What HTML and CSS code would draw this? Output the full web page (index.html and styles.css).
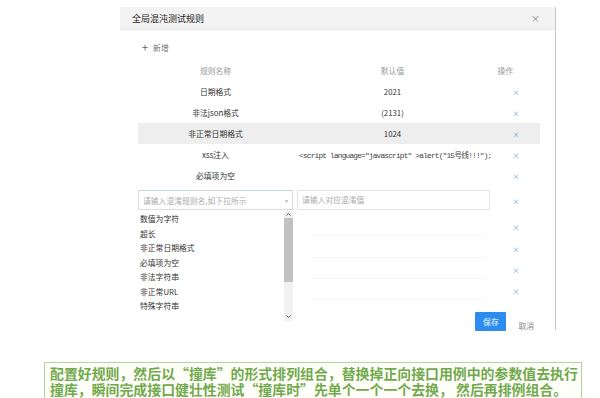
FILE: index.html
```html
<!DOCTYPE html>
<html lang="zh-CN">
<head>
    <meta charset="UTF-8">
    <meta name="viewport" content="width=device-width, initial-scale=1.0">
    <title>全局混沌测试规则</title>
    <link rel="stylesheet" href="styles.css">
</head>
<body>
    <div class="page">
        <div class="modal">
            <div class="modal-head">
                <span class="modal-title">全局混沌测试规则</span>
                <span class="modal-close">×</span>
            </div>
            <div class="modal-body">
                <div class="add-btn"><span class="plus">+</span>新增</div>

                <div class="rules">
                    <div class="row row-head">
                        <div class="col col-name">规则名称</div>
                        <div class="col col-value">默认值</div>
                        <div class="col col-op">操作</div>
                    </div>
                    <div class="row">
                        <div class="col col-name">日期格式</div>
                        <div class="col col-value">2021</div>
                        <div class="col col-op"><span class="del">×</span></div>
                    </div>
                    <div class="row">
                        <div class="col col-name">非法json格式</div>
                        <div class="col col-value">(2131)</div>
                        <div class="col col-op"><span class="del">×</span></div>
                    </div>
                    <div class="row row-hover">
                        <div class="col col-name">非正常日期格式</div>
                        <div class="col col-value">1024</div>
                        <div class="col col-op"><span class="del">×</span></div>
                    </div>
                    <div class="row">
                        <div class="col col-name">xss注入</div>
                        <div class="col col-value code">&lt;script language="javascript" &gt;alert("15号线!!!");</div>
                        <div class="col col-op"><span class="del">×</span></div>
                    </div>
                    <div class="row">
                        <div class="col col-name">必填项为空</div>
                        <div class="col col-value"></div>
                        <div class="col col-op"><span class="del">×</span></div>
                    </div>
                    <div class="row row-edit">
                        <div class="col col-name">
                            <div class="select">
                                <span class="placeholder">请输入混淆规则名,如下拉所示</span>
                                <span class="caret">▾</span>
                                <div class="dropdown">
                                    <div class="options">
                                        <div class="option">数值为字符</div>
                                        <div class="option">超长</div>
                                        <div class="option">非正常日期格式</div>
                                        <div class="option">必填项为空</div>
                                        <div class="option">非法字符串</div>
                                        <div class="option">非正常URL</div>
                                        <div class="option">特殊字符串</div>
                                    </div>
                                    <div class="scrollbar">
                                        <svg class="arrow" width="9" height="7" viewBox="0 0 9 7"><path d="M2.5 4.5 L4.5 2.5 L6.5 4.5" fill="none" stroke="#555" stroke-width="1"/></svg>
                                        <div class="thumb"></div>
                                        <svg class="arrow arrow-down" width="9" height="7" viewBox="0 0 9 7"><path d="M2.5 2.5 L4.5 4.5 L6.5 2.5" fill="none" stroke="#555" stroke-width="1"/></svg>
                                    </div>
                                </div>
                            </div>
                        </div>
                        <div class="col col-value">
                            <div class="text-input">请输入对应混淆值</div>
                        </div>
                        <div class="col col-op"><span class="del">×</span></div>
                    </div>
                    <div class="row row-empty row-first-empty">
                        <div class="col col-name"></div>
                        <div class="col col-value"><div class="blank"></div></div>
                        <div class="col col-op"><span class="del">×</span></div>
                    </div>
                    <div class="row row-empty">
                        <div class="col col-name"></div>
                        <div class="col col-value"><div class="blank"></div></div>
                        <div class="col col-op"><span class="del">×</span></div>
                    </div>
                    <div class="row row-empty">
                        <div class="col col-name"></div>
                        <div class="col col-value"><div class="blank"></div></div>
                        <div class="col col-op"><span class="del">×</span></div>
                    </div>
                    <div class="row row-empty">
                        <div class="col col-name"></div>
                        <div class="col col-value"><div class="blank"></div></div>
                        <div class="col col-op"><span class="del">×</span></div>
                    </div>
                </div>

                <div class="modal-foot">
                    <button class="btn-save">保存</button>
                    <span class="btn-cancel">取消</span>
                </div>
            </div>
        </div>

        <div class="note">
            配置好规则，然后以“撞库”的形式排列组合，替换掉正向接口用例中的参数值去执行撞库，瞬间完成接口健壮性测试“撞库时”先单个一个一个去换， 然后再排例组合。
        </div>
    </div>
</body>
</html>
```

FILE: styles.css
```css
body {
    margin: 0;
    background: #ffffff;
    font-family: 'Noto Sans CJK SC', 'Noto Sans', sans-serif;
    color: #333;
    height: 398px;
    overflow: hidden;
}

.page {
    padding-top: 7px;
}

.modal {
    margin-left: 120px;
    width: 436px;
    height: 323px;
    border-right: 1px solid #c9c9c9;
    box-sizing: border-box;
}

.modal-head {
    height: 22px;
    background: #f3f3f3;
    border-bottom: 1px solid #e9e9e9;
    display: flex;
    align-items: center;
    justify-content: space-between;
    padding: 0 15px 0 12px;
}

.modal-title {
    font-size: 9px;
    color: #222;
}

.modal-close {
    font-size: 9px;
    color: #777;
}

.modal-body {
    padding-top: 9px;
}

.add-btn {
    height: 16px;
    display: flex;
    align-items: center;
    padding-left: 22px;
    font-size: 7.8px;
    color: #777;
    margin-bottom: 4px;
}

.plus {
    font-size: 11px;
    margin-right: 5px;
    color: #666;
}

.rules {
    margin-left: 18px;
    width: 402px;
}

.row {
    display: flex;
    align-items: center;
    height: 21px;
    font-size: 7.8px;
    color: #333;
}

.row-head {
    height: 22px;
    color: #999;
}

.row-hover {
    background: #eeeeee;
}

.col {
    text-align: center;
    white-space: nowrap;
}

.col-name {
    width: 155px;
}

.col-value {
    width: 199px;
}

.col-op {
    width: 48px;
}

.row-head .col-op {
    padding-right: 27px;
    box-sizing: border-box;
    text-align: right;
}

.del {
    color: #5a9ad8;
    font-size: 7px;
}

.code {
    font-family: 'Liberation Mono', 'Noto Sans CJK SC', monospace;
    font-size: 7.8px;
    letter-spacing: -0.8px;
    color: #444;
    text-align: left;
    padding-left: 6px;
    box-sizing: border-box;
}

.row-edit {
    height: 28px;
}

.select {
    position: relative;
    height: 20px;
    border: 1px solid #dcdcdc;
    border-top-color: #c6d6e6;
    box-sizing: border-box;
    display: flex;
    align-items: center;
    justify-content: space-between;
    padding: 0 4px;
    color: #aaa;
}

.caret {
    font-size: 6px;
    color: #bbb;
}

.dropdown {
    position: absolute;
    top: 20px;
    left: -1px;
    width: 155px;
    height: 110px;
    background: #fff;
    display: flex;
    overflow: hidden;
    z-index: 2;
}

.options {
    flex: 1;
    padding-top: 1px;
    text-align: left;
}

.option {
    height: 14.5px;
    line-height: 14.5px;
    padding-left: 2px;
    color: #333;
}

.scrollbar {
    width: 9px;
    background: #f1f1f1;
    display: flex;
    flex-direction: column;
}

.arrow {
    display: block;
    flex: none;
}

.thumb {
    width: 9px;
    height: 64px;
    background: #c1c1c1;
}

.arrow-down {
    margin-top: auto;
    margin-bottom: 1px;
}

.col-value .text-input {
    margin-left: 4px;
    width: 193px;
    height: 20px;
    border: 1px solid #e4e4e4;
    box-sizing: border-box;
    text-align: left;
    padding-left: 4px;
    line-height: 18px;
    color: #aaa;
}

.row-first-empty {
    height: 24px;
}

.blank {
    margin: 0 6px 0 16px;
    height: 18px;
    border-bottom: 1px solid #f6f6f6;
}

.modal-foot {
    display: flex;
    justify-content: flex-end;
    align-items: center;
    gap: 12px;
    margin-top: 11px;
    padding-right: 21px;
}

.btn-save {
    width: 31px;
    height: 19px;
    border: none;
    background: #2d8cf0;
    color: #fff;
    font-family: 'Noto Sans CJK SC', sans-serif;
    font-size: 7.8px;
    padding: 0;
    border-radius: 1px;
}

.btn-cancel {
    font-size: 7.8px;
    color: #888;
    margin-top: 8px;
}

.note {
    margin: 32px 0 0 44px;
    width: 538px;
    height: 44px;
    border: 1px solid #b7d29c;
    box-sizing: border-box;
    background: #fffffa;
    padding: 3px 0 0 5px;
    font-size: 13.9px;
    line-height: 15.5px;
    font-weight: bold;
    color: #72a94c;
}
```
